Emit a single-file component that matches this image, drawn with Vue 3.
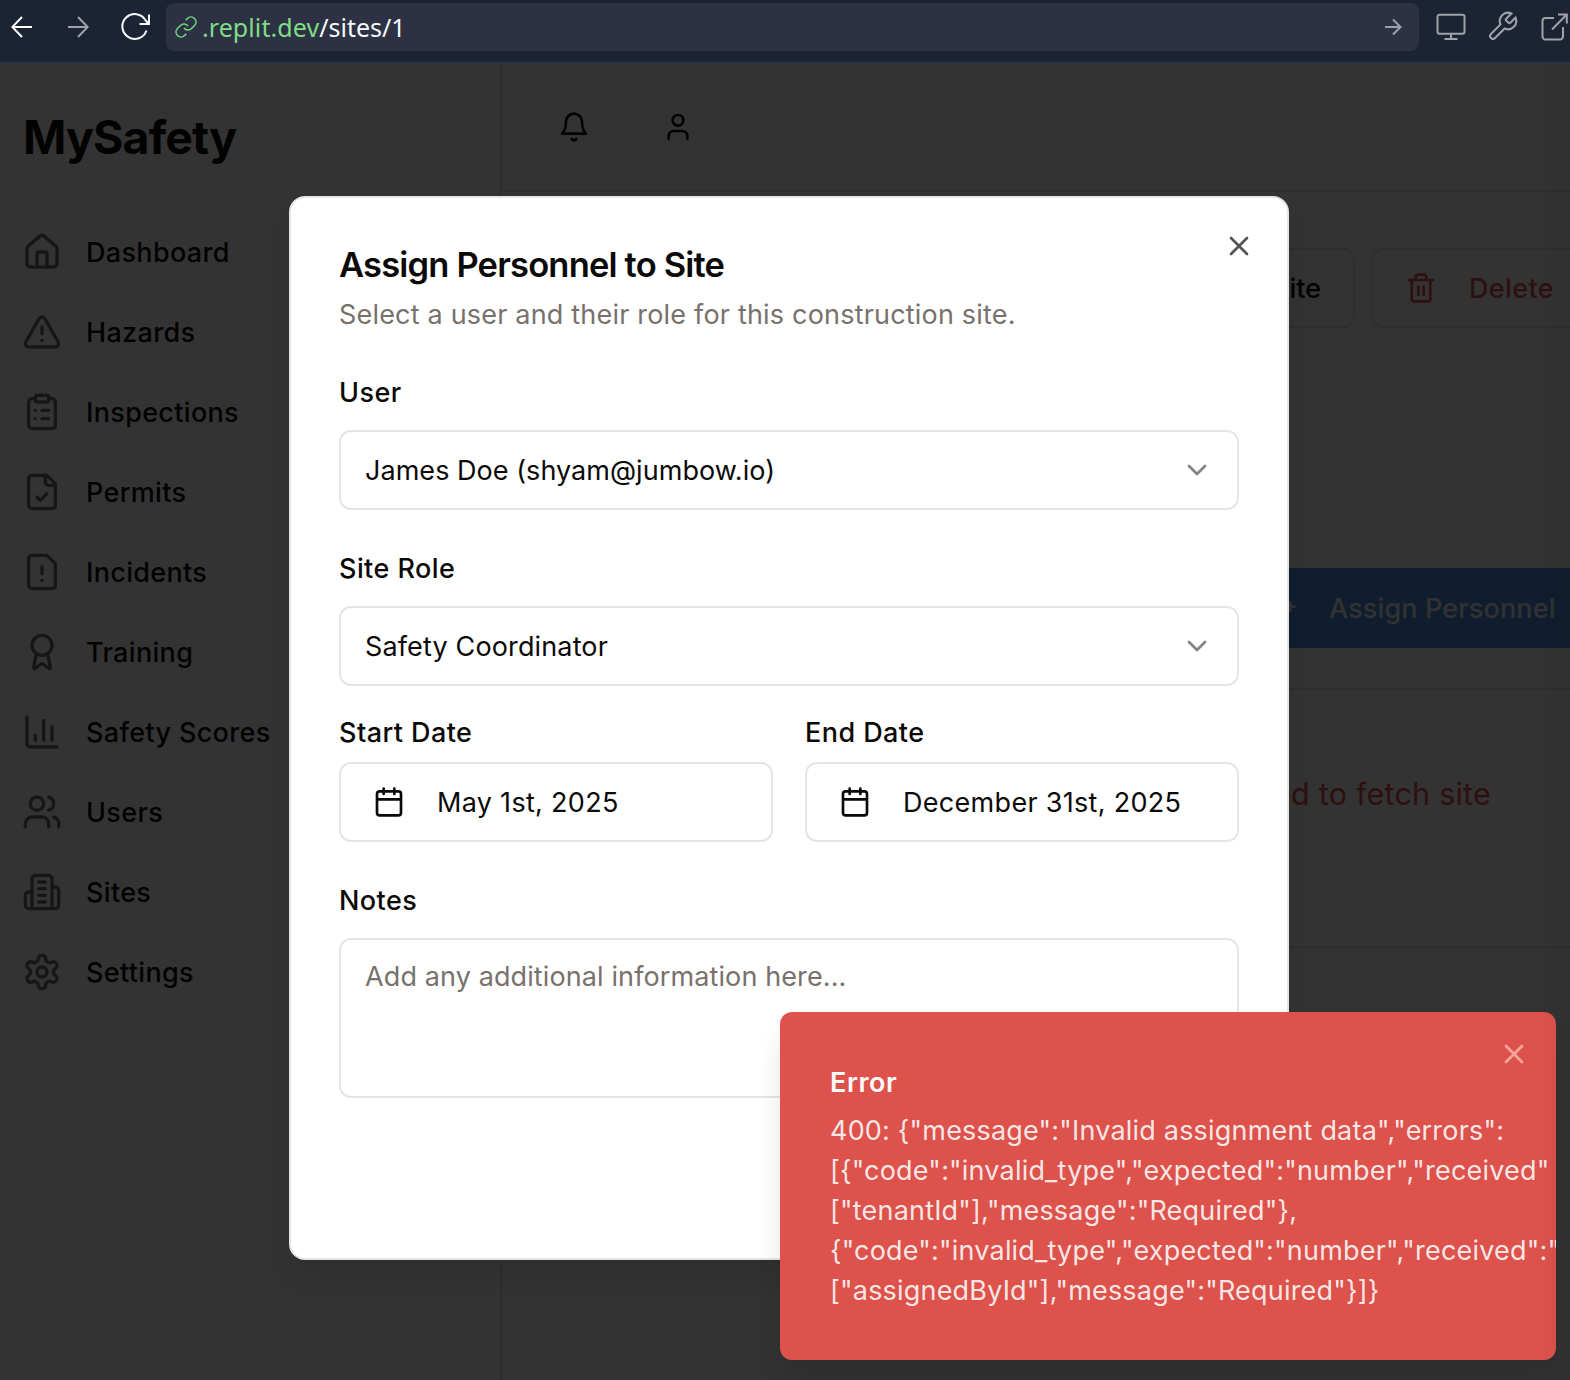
<script setup>
import { ref } from 'vue'

const nav = [
  { label: 'Dashboard', paths: ['M15 21v-8a1 1 0 0 0-1-1h-4a1 1 0 0 0-1 1v8', 'M3 10a2 2 0 0 1 .709-1.528l7-5.999a2 2 0 0 1 2.582 0l7 5.999A2 2 0 0 1 21 10v9a2 2 0 0 1-2 2H5a2 2 0 0 1-2-2z'] },
  { label: 'Hazards', paths: ['m21.73 18-8-14a2 2 0 0 0-3.48 0l-8 14A2 2 0 0 0 4 21h16a2 2 0 0 0 1.73-3', 'M12 9v4', 'M12 17h.01'] },
  { label: 'Inspections', paths: ['M9 2h6a1 1 0 0 1 1 1v2a1 1 0 0 1-1 1H9a1 1 0 0 1-1-1V3a1 1 0 0 1 1-1z', 'M16 4h2a2 2 0 0 1 2 2v14a2 2 0 0 1-2 2H6a2 2 0 0 1-2-2V6a2 2 0 0 1 2-2h2', 'M12 11h4', 'M12 16h4', 'M8 11h.01', 'M8 16h.01'] },
  { label: 'Permits', paths: ['M15 2H6a2 2 0 0 0-2 2v16a2 2 0 0 0 2 2h12a2 2 0 0 0 2-2V7Z', 'M14 2v4a2 2 0 0 0 2 2h4', 'm9 15 2 2 4-4'] },
  { label: 'Incidents', paths: ['M15 2H6a2 2 0 0 0-2 2v16a2 2 0 0 0 2 2h12a2 2 0 0 0 2-2V7Z', 'M12 9v4', 'M12 17h.01'] },
  { label: 'Training', paths: ['m15.477 12.89 1.515 8.526a.5.5 0 0 1-.81.47l-3.58-2.687a1 1 0 0 0-1.197 0l-3.586 2.686a.5.5 0 0 1-.81-.469l1.514-8.526', 'M18 8A6 6 0 1 1 6 8a6 6 0 0 1 12 0z'] },
  { label: 'Safety Scores', paths: ['M3 3v16a2 2 0 0 0 2 2h16', 'M18 17V9', 'M13 17V5', 'M8 17v-3'] },
  { label: 'Users', paths: ['M16 21v-2a4 4 0 0 0-4-4H6a4 4 0 0 0-4 4v2', 'M13 7a4 4 0 1 1-8 0a4 4 0 0 1 8 0z', 'M22 21v-2a4 4 0 0 0-3-3.87', 'M16 3.13a4 4 0 0 1 0 7.75'] },
  { label: 'Sites', paths: ['M6 22V4a2 2 0 0 1 2-2h8a2 2 0 0 1 2 2v18Z', 'M6 12H4a2 2 0 0 0-2 2v6a2 2 0 0 0 2 2h2', 'M18 9h2a2 2 0 0 1 2 2v9a2 2 0 0 1-2 2h-2', 'M10 6h4', 'M10 10h4', 'M10 14h4', 'M10 18h4'] },
  { label: 'Settings', paths: ['M12.22 2h-.44a2 2 0 0 0-2 2v.18a2 2 0 0 1-1 1.73l-.43.25a2 2 0 0 1-2 0l-.15-.08a2 2 0 0 0-2.73.73l-.22.38a2 2 0 0 0 .73 2.73l.15.1a2 2 0 0 1 1 1.72v.51a2 2 0 0 1-1 1.74l-.15.09a2 2 0 0 0-.73 2.73l.22.38a2 2 0 0 0 2.73.73l.15-.08a2 2 0 0 1 2 0l.43.25a2 2 0 0 1 1 1.73V20a2 2 0 0 0 2 2h.44a2 2 0 0 0 2-2v-.18a2 2 0 0 1 1-1.73l.43-.25a2 2 0 0 1 2 0l.15.08a2 2 0 0 0 2.73-.73l.22-.39a2 2 0 0 0-.73-2.73l-.15-.08a2 2 0 0 1-1-1.74v-.5a2 2 0 0 1 1-1.74l.15-.09a2 2 0 0 0 .73-2.73l-.22-.38a2 2 0 0 0-2.73-.73l-.15.08a2 2 0 0 1-2 0l-.43-.25a2 2 0 0 1-1-1.73V4a2 2 0 0 0-2-2z', 'M15 12a3 3 0 1 1-6 0a3 3 0 0 1 6 0z'] },
]

const selects = [
  { label: 'User', value: 'James Doe (shyam@jumbow.io)', cls: 'user' },
  { label: 'Site Role', value: 'Safety Coordinator', cls: 'role' },
]
const dates = [
  { label: 'Start Date', value: 'May 1st, 2025' },
  { label: 'End Date', value: 'December 31st, 2025' },
]
const notes = ref('')

const errorLines = [
  '400: {"message":"Invalid assignment data","errors":',
  '[{"code":"invalid_type","expected":"number","received"',
  '["tenantId"],"message":"Required"},',
  '{"code":"invalid_type","expected":"number","received":"',
  '["assignedById"],"message":"Required"}]}',
]
</script>

<template>
  <div class="screen">
    <header class="browser">
      <svg class="back" width="22" height="22" viewBox="0 0 22 22"><path d="M21 11H1.5M11 1 1.3 11 11 21" /></svg>
      <svg class="forward" width="22" height="22" viewBox="0 0 22 22"><path d="M1 11h19.500M11 1l9.700 10L11 21" /></svg>
      <svg class="reload" width="30" height="28" viewBox="0 0 30 28"><path d="M25.500 17.500A12.400 12.400 0 1 1 24.500 7.300L27.500 10.500M28 1.500v9.500h-9.500" /></svg>
      <div class="address">
        <svg class="chain" width="24" height="24" viewBox="0 0 24 24"><path d="M10 13a5 5 0 0 0 7.540.540l3-3a5 5 0 0 0-7.070-7.070l-1.720 1.710M14 11a5 5 0 0 0-7.540-.540l-3 3a5 5 0 0 0 7.070 7.070l1.710-1.710" /></svg>
        <span class="url"><b>.replit.dev</b>/sites/1</span>
        <svg class="go" width="18" height="18" viewBox="0 0 18 18"><path d="M1 9h15.500M9 1.500 16.500 9 9 16.500" /></svg>
      </div>
      <svg class="tool" width="30" height="28" viewBox="0 0 30 28"><path d="M3.500 1.700h23a2 2 0 0 1 2 2v15a2 2 0 0 1-2 2h-23a2 2 0 0 1-2-2v-15a2 2 0 0 1 2-2zM15 21v5M8.500 26h13" /></svg>
      <svg class="tool wrench" width="33" height="33" viewBox="0 0 24 24"><path d="M14.700 6.300a1 1 0 0 0 0 1.400l1.600 1.600a1 1 0 0 0 1.400 0l3.770-3.770a6 6 0 0 1-7.940 7.940l-6.910 6.910a2.120 2.120 0 0 1-3-3l6.910-6.910a6 6 0 0 1 7.940-7.940l-3.760 3.760z" /></svg>
      <svg class="tool open" width="28" height="28" viewBox="0 0 28 28"><path d="M13 5H4.500a3 3 0 0 0-3 3v15.500a3 3 0 0 0 3 3H19a3 3 0 0 0 3-3V14M17 1.500h8.800v9M25.500 1.800 11 16.500" /></svg>
    </header>

    <div class="page">
      <aside class="sidebar">
        <h1>MySafety</h1>
        <nav>
          <a v-for="item in nav" :key="item.label">
            <svg class="icon" width="40" height="40" viewBox="0 0 24 24"><path v-for="p in item.paths" :key="p" :d="p" /></svg>
            <span>{{ item.label }}</span>
          </a>
        </nav>
      </aside>

      <main class="main">
        <div class="topbar">
          <svg class="icon" width="32" height="32" viewBox="0 0 24 24"><path d="M6 8a6 6 0 0 1 12 0c0 7 3 9 3 9H3s3-2 3-9M10.300 21a1.940 1.940 0 0 0 3.400 0" /></svg>
          <svg class="icon" width="32" height="32" viewBox="0 0 24 24"><path d="M19 21v-2a4 4 0 0 0-4-4H9a4 4 0 0 0-4 4v2" /><circle cx="12" cy="7" r="4" /></svg>
        </div>
        <div class="actions">
          <button class="outline edit"><span>Edit Site</span></button>
          <button class="outline delete">
            <svg class="icon" width="32" height="32" viewBox="0 0 24 24"><path d="M3 6h18M19 6v14a2 2 0 0 1-2 2H7a2 2 0 0 1-2-2V6M8 6V4a2 2 0 0 1 2-2h4a2 2 0 0 1 2 2v2M10 11v6M14 11v6" /></svg>
            <span>Delete</span>
          </button>
        </div>
        <div class="assign-row">
          <button class="assign">
            <svg class="icon" width="32" height="32" viewBox="0 0 24 24"><path d="M16 21v-2a4 4 0 0 0-4-4H6a4 4 0 0 0-4 4v2M19 8v6M22 11h-6" /><circle cx="9" cy="7" r="4" /></svg>
            <span>Assign Personnel</span>
          </button>
        </div>
        <div class="failure"><span>Failed to fetch site</span></div>
      </main>

      <div class="overlay"></div>

      <section class="dialog">
        <svg class="icon close" width="32" height="32" viewBox="0 0 24 24"><path d="M18 6 6 18M6 6l12 12" /></svg>
        <h2>Assign Personnel to Site</h2>
        <p class="desc">Select a user and their role for this construction site.</p>
        <div v-for="s in selects" :key="s.label" class="field">
          <label>{{ s.label }}</label>
          <div class="select">
            <span :class="s.cls">{{ s.value }}</span>
            <svg class="icon chevron" width="32" height="32" viewBox="0 0 24 24"><path d="m6 9 6 6 6-6" /></svg>
          </div>
        </div>
        <div class="dates">
          <div v-for="d in dates" :key="d.label" class="date">
            <label>{{ d.label }}</label>
            <div class="picker">
              <svg class="icon" width="32" height="32" viewBox="0 0 24 24"><path d="M8 2v4M16 2v4M5 4h14a2 2 0 0 1 2 2v14a2 2 0 0 1-2 2H5a2 2 0 0 1-2-2V6a2 2 0 0 1 2-2zM3 10h18" /></svg>
              <span>{{ d.value }}</span>
            </div>
          </div>
        </div>
        <div class="field">
          <label>Notes</label>
          <textarea v-model="notes" placeholder="Add any additional information here..."></textarea>
        </div>
      </section>

      <section class="toast">
        <svg class="icon dismiss" width="32" height="32" viewBox="0 0 24 24"><path d="M18 6 6 18M6 6l12 12" /></svg>
        <strong>Error</strong>
        <div class="message"><div v-for="(line, i) in errorLines" :key="i">{{ line }}</div></div>
      </section>
      <div class="edge"></div>
    </div>
  </div>
</template>

<style>
body { margin: 0; overflow: hidden; }
</style>

<style scoped>
.screen {
  width: 1570px;
  height: 1380px;
  display: flex;
  flex-direction: column;
  overflow: hidden;
  font-family: Inter, "Liberation Sans", sans-serif;
  font-size: 27px;
  line-height: 40px;
  color: #0c0a09;
}
.screen * { box-sizing: border-box; }
svg { flex: none; fill: none; display: block; }
.icon { stroke: currentColor; stroke-width: 2; stroke-linecap: round; stroke-linejoin: round; }

.browser {
  flex: none;
  height: 64px;
  display: flex;
  align-items: flex-start;
  background: #1c2333;
  border-bottom: 2px solid #2b3245;
}
.browser svg { stroke: #9fa2a8; stroke-width: 2; }
.browser .back { margin: 16px 0 0 11px; stroke: #fff; }
.browser .forward { margin: 16px 0 0 34px; }
.browser .reload { margin: 13px 0 0 32px; stroke: #f5f9fc; }
.address {
  display: flex;
  align-items: center;
  width: 1253px;
  height: 48px;
  margin: 3px 17px 0 15px;
  padding: 0 17px 0 8px;
  border-radius: 8px;
  background: #2d3143;
}
.browser .chain { stroke: #6cd97e; stroke-width: 1.600; }
.url { flex: 1; margin-left: 4px; color: #f5f9fc; font: 25px/40px "Noto Sans", sans-serif; }
.url b { font-weight: 400; color: #7fdc86; letter-spacing: 0.080px; }
.browser .tool { margin-top: 13px; }
.browser .wrench { margin: 10px 0 0 20px; stroke-width: 1.500; }
.browser .open { margin-left: 22px; }

.page { position: relative; flex: 1; display: flex; overflow: hidden; background: #fff; }
.sidebar { flex: none; width: 502px; padding: 0 22px; border-right: 2px solid #e5e5e5; }
h1 { margin: 41px 0 0 1px; font-size: 46.500px; font-weight: 700; line-height: 64px; letter-spacing: -0.900px; }
nav { margin-top: 43px; display: flex; flex-direction: column; }
nav a { display: flex; align-items: center; gap: 24px; height: 80px; font-weight: 500; letter-spacing: 0.330px; white-space: nowrap; }
nav span, button span, .select span, .picker span { margin-top: 2px; }
nav .icon { color: #78716c; }
.main { flex: 1; min-width: 0; }
.topbar { height: 128px; padding: 47px 0 0 56px; display: flex; gap: 72px; border-bottom: 2px solid #e5e5e5; }
.actions { display: flex; gap: 16px; margin-top: 56px; padding-left: 658px; }
button { flex: none; display: flex; align-items: center; height: 80px; padding: 0 32px; border: 0; background: #fff; font: 500 27px/40px Inter, sans-serif; color: #0c0a09; white-space: nowrap; }
.outline { border: 2px solid #e5e5e5; border-radius: 12px; }
.edit { width: 195px; justify-content: flex-end; }
.delete { width: 220px; gap: 32px; color: #de524c; letter-spacing: 0.350px; }
.assign-row { height: 362px; padding: 240px 0 0 731px; border-bottom: 2px solid #e5e5e5; }
.assign { width: 380px; gap: 32px; background: #4b91e6; color: #fafafa; letter-spacing: 0.130px; }
.failure { height: 258px; padding: 82px 79px 0 0; border-bottom: 2px solid #e5e5e5; text-align: right; font-size: 30.500px; line-height: 44px; letter-spacing: 0.220px; color: #de524c; }
.overlay { position: absolute; inset: 0; background: rgba(0, 0, 0, 0.8); }

.dialog {
  position: absolute;
  left: 289px;
  top: 132px;
  width: 1000px;
  height: 1064px;
  padding: 48px;
  border: 2px solid #e5e5e5;
  border-radius: 16px;
  background: #fff;
  box-shadow: 0 20px 30px -6px rgba(0, 0, 0, 0.1);
}
.close { position: absolute; right: 32px; top: 32px; color: #545352; }
h2 { margin: 0; padding-top: 2px; font-size: 34.500px; line-height: 34px; font-weight: 600; letter-spacing: -0.820px; }
.desc { margin: 13px 0 37px; letter-spacing: 0.190px; color: #78716c; }
.field { display: flex; flex-direction: column; gap: 18px; margin-bottom: 38px; }
label { padding-top: 2px; line-height: 38px; font-weight: 500; letter-spacing: 0.440px; }
.select, .picker, textarea { border: 2px solid #e5e5e5; border-radius: 12px; }
.select { height: 80px; display: flex; align-items: center; justify-content: space-between; padding: 0 24px; }
.user { letter-spacing: 0.040px; }
.role { letter-spacing: 0.140px; }
.chevron { opacity: 0.5; }
.dates { display: flex; gap: 32px; margin: -12px 0 38px; }
.date { flex: 1; display: flex; flex-direction: column; gap: 10px; }
.picker { height: 80px; display: flex; align-items: center; gap: 32px; padding: 0 32px; letter-spacing: 0.300px; }
textarea { display: block; width: 100%; height: 160px; padding: 17px 24px 15px; resize: none; outline: none; background: #fff; font: inherit; letter-spacing: 0.110px; }
textarea::placeholder { color: #78716c; opacity: 1; }

.toast {
  position: absolute;
  left: 780px;
  top: 948px;
  width: 776px;
  height: 348px;
  padding: 51px 0 0 50px;
  overflow: hidden;
  border-radius: 12px;
  background: #de524c;
  color: #fafafa;
  box-shadow: 0 20px 30px -6px rgba(0, 0, 0, 0.15);
}
.toast strong { display: block; font-weight: 600; letter-spacing: 0.550px; }
.message { margin-top: 8px; letter-spacing: 0.190px; color: rgba(250, 250, 250, 0.9); white-space: nowrap; }
.dismiss { position: absolute; right: 26px; top: 26px; color: #f5a5a2; }
.edge { position: absolute; inset: 0 0 0 auto; width: 40px; background: linear-gradient(to right, transparent, rgba(0, 0, 0, 0.05)); }
</style>
